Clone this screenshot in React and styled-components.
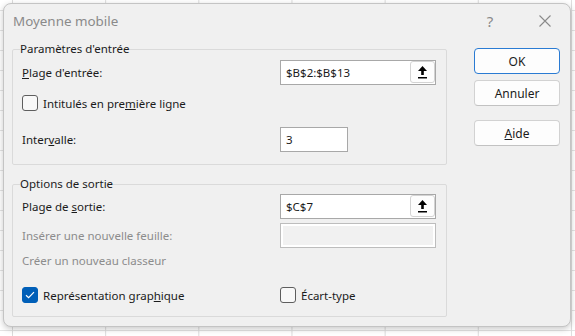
import React from 'react';
import styled, { createGlobalStyle, css } from 'styled-components';

const Global = createGlobalStyle`
  html, body { margin: 0; padding: 0; }
  body {
    width: 575px;
    height: 336px;
    overflow: hidden;
    background-color: #ffffff;
    background-image:
      linear-gradient(to right, #dcdcdc 1px, transparent 1px),
      linear-gradient(to bottom, #e4e4e4 1px, transparent 1px);
    background-size: 93.17px 100%, 100% 20px;
    background-position: 12px 0, 0 10px;
    font-family: "Noto Sans", "Open Sans", sans-serif;
    font-size: 11.5px;
    color: #1b1b1b;
  }
`;

const Page = styled.div`
  padding: 3px;
`;

const Dialog = styled.div`
  box-sizing: border-box;
  width: 568px;
  height: 324px;
  background: #f0f0f0;
  border: 1px solid #c4c4c4;
  border-radius: 8px;
  box-shadow: 0 2px 6px rgba(0, 0, 0, 0.22);
  display: flex;
  flex-direction: column;
`;

const TitleBar = styled.div`
  height: 37px;
  padding: 0 2px 4px 9px;
  box-sizing: border-box;
  display: flex;
  align-items: center;
`;

const Title = styled.div`
  flex: 1;
  font-size: 13.4px;
  color: #8a8a8a;
`;

const TitleButton = styled.div`
  width: ${p => p.$w || 46}px;
  height: 100%;
  display: flex;
  align-items: center;
  justify-content: center;
  color: #8a8a8a;
  font-size: 15px;
`;

const Body = styled.div`
  display: flex;
  gap: 27px;
  padding: 0 10px 0 8px;
`;

const LeftColumn = styled.div`
  width: 435px;
  display: flex;
  flex-direction: column;
`;

const Group = styled.fieldset`
  margin: ${p => p.$top || 0}px 0 0 0;
  padding: 0;
  border: 1px solid #dadada;
  border-radius: 2px;
  min-width: 0;
`;

const Legend = styled.legend`
  margin-left: 7px;
  padding: 0;
  line-height: 16px;
  font-size: 11.5px;
  color: #1b1b1b;
`;

const Rows = styled.div`
  display: flex;
  flex-direction: column;
  padding: ${p => p.$top}px 10px ${p => p.$bottom}px 9px;
`;

const Row = styled.div`
  display: flex;
  align-items: center;
  height: ${p => p.$h || 25}px;
  margin-top: ${p => p.$mt || 0}px;
`;

const Label = styled.div`
  width: ${p => (p.$auto ? 'auto' : '258px')};
  color: ${p => (p.$disabled ? '#8c8c8c' : '#1b1b1b')};
  white-space: nowrap;
`;

const InputBox = styled.div`
  box-sizing: border-box;
  width: ${p => p.$w}px;
  height: 25px;
  border: 1px solid #a8a8a8;
  background: #ffffff;
  display: flex;
  align-items: flex-start;
  ${p =>
    p.$disabled &&
    css`
      border-color: #bdbdbd;
      background: #f1f1f1;
      box-shadow: inset 0 0 0 2px #ffffff;
    `}
`;

const InputText = styled.div`
  flex: 1;
  padding-left: 5px;
  line-height: 23px;
  color: #1b1b1b;
`;

const RefButton = styled.div`
  box-sizing: border-box;
  width: 25px;
  height: 22px;
  background: #fdfdfd;
  border: 1px solid #d3d3d3;
  border-radius: 3px;
  display: flex;
  align-items: center;
  justify-content: center;
`;

const CheckItem = styled.div`
  display: flex;
  align-items: center;
  gap: 5px;
  width: ${p => (p.$w ? `${p.$w}px` : 'auto')};
`;

const Box = styled.div`
  box-sizing: border-box;
  width: 16px;
  height: 16px;
  border-radius: 3px;
  border: 1px solid ${p => (p.$checked ? '#005fb8' : '#5e5e5e')};
  background: ${p => (p.$checked ? '#005fb8' : '#f8f8f8')};
  display: flex;
  align-items: center;
  justify-content: center;
`;

const ButtonColumn = styled.div`
  width: 86px;
  padding-top: 7px;
  display: flex;
  flex-direction: column;
`;

const Button = styled.div`
  box-sizing: border-box;
  width: 86px;
  height: 26px;
  margin-top: ${p => p.$mt || 0}px;
  background: #fdfdfd;
  border: 1px solid ${p => (p.$primary ? '#2a7bd3' : '#d2d2d2')};
  border-bottom-color: ${p => (p.$primary ? '#2a7bd3' : '#c2c2c2')};
  border-radius: 4px;
  display: flex;
  align-items: center;
  justify-content: center;
  font-size: 12px;
  color: #1b1b1b;
`;

const UploadIcon = () => (
  <svg width="11" height="14" viewBox="0 0 11 14">
    <polygon points="5.5,1 1,6 10,6" fill="#000" />
    <rect x="4.2" y="5" width="2.6" height="5" fill="#000" />
    <rect x="1" y="12" width="9" height="1.5" fill="#000" />
  </svg>
);

const CloseIcon = () => (
  <svg width="12" height="12" viewBox="0 0 12 12">
    <path d="M0.5 0.5 L11.5 11.5 M11.5 0.5 L0.5 11.5" stroke="#8a8a8a" strokeWidth="1.1" />
  </svg>
);

const CheckMark = () => (
  <svg width="10" height="8" viewBox="0 0 10 8">
    <path d="M1 4.2 L3.6 6.6 L9 1.2" fill="none" stroke="#fff" strokeWidth="1.2" />
  </svg>
);

const Checkbox = ({ checked, children, w }) => (
  <CheckItem $w={w}>
    <Box $checked={checked}>{checked && <CheckMark />}</Box>
    <Label $auto>{children}</Label>
  </CheckItem>
);

export default function App() {
  return (
    <>
      <Global />
      <Page>
        <Dialog>
          <TitleBar>
            <Title>Moyenne mobile</Title>
            <TitleButton $w={64}>?</TitleButton>
            <TitleButton>
              <CloseIcon />
            </TitleButton>
          </TitleBar>
          <Body>
            <LeftColumn>
              <Group>
                <Legend>Paramètres d'entrée</Legend>
                <Rows $top={3} $bottom={12}>
                  <Row>
                    <Label>
                      <u>P</u>lage d'entrée:
                    </Label>
                    <InputBox $w={156}>
                      <InputText>$B$2:$B$13</InputText>
                      <RefButton>
                        <UploadIcon />
                      </RefButton>
                    </InputBox>
                  </Row>
                  <Row $h={16} $mt={10}>
                    <Checkbox>
                      Intitulés en pre<u>m</u>ière ligne
                    </Checkbox>
                  </Row>
                  <Row $mt={16}>
                    <Label>
                      Inter<u>v</u>alle:
                    </Label>
                    <InputBox $w={68}>
                      <InputText>3</InputText>
                    </InputBox>
                  </Row>
                </Rows>
              </Group>
              <Group $top={11}>
                <Legend>Options de sortie</Legend>
                <Rows $top={2} $bottom={13}>
                  <Row>
                    <Label>
                      Plage de <u>s</u>ortie:
                    </Label>
                    <InputBox $w={156}>
                      <InputText>$C$7</InputText>
                      <RefButton>
                        <UploadIcon />
                      </RefButton>
                    </InputBox>
                  </Row>
                  <Row $mt={4}>
                    <Label $disabled>Insérer une nouvelle feuille:</Label>
                    <InputBox $w={156} $disabled />
                  </Row>
                  <Row $h={20} $mt={2}>
                    <Label $disabled>Créer un nouveau classeur</Label>
                  </Row>
                  <Row $h={16} $mt={17}>
                    <Checkbox checked w={258}>
                      Représentation grap<u>h</u>ique
                    </Checkbox>
                    <Checkbox>Écart-type</Checkbox>
                  </Row>
                </Rows>
              </Group>
            </LeftColumn>
            <ButtonColumn>
              <Button $primary>OK</Button>
              <Button $mt={6}>Annuler</Button>
              <Button $mt={14}>
                <span>
                  <u>A</u>ide
                </span>
              </Button>
            </ButtonColumn>
          </Body>
        </Dialog>
      </Page>
    </>
  );
}
